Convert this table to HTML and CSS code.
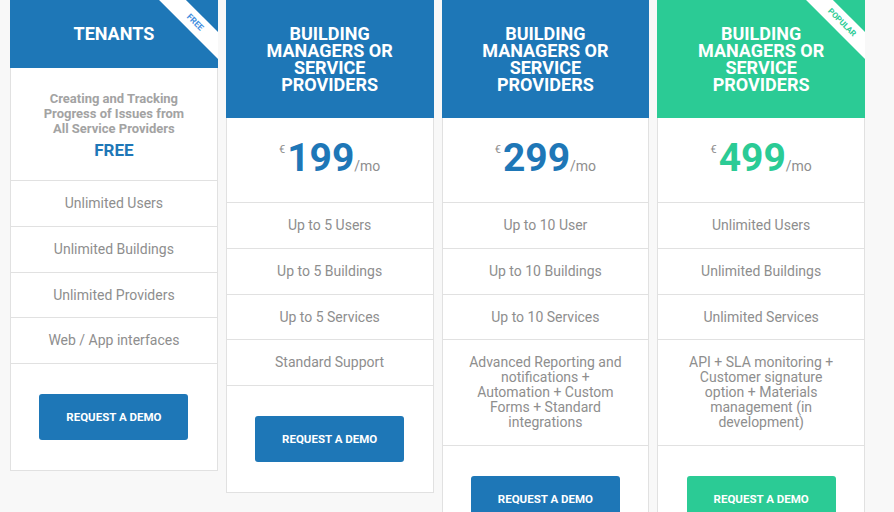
FILE: index.html
```html
<!DOCTYPE html>
<html lang="en">
<head>
<meta charset="utf-8">
<title>Pricing</title>
<link rel="stylesheet" href="styles.css">
</head>
<body>
<div class="plans">
  <div class="plan">
    <div class="plan-head head-short">
      <h2>TENANTS</h2>
      <span class="ribbon ribbon-blue">FREE</span>
    </div>
    <div class="plan-body">
      <div class="plan-intro">
        <p>Creating and Tracking Progress of Issues from All Service Providers</p>
        <div class="free">FREE</div>
      </div>
      <ul class="features">
        <li>Unlimited Users</li>
        <li>Unlimited Buildings</li>
        <li>Unlimited Providers</li>
        <li>Web / App interfaces</li>
      </ul>
      <div class="plan-cta"><a class="btn" href="#">REQUEST A DEMO</a></div>
    </div>
  </div>

  <div class="plan">
    <div class="plan-head">
      <h2>BUILDING MANAGERS OR SERVICE PROVIDERS</h2>
    </div>
    <div class="plan-body">
      <div class="price"><span class="cur">€</span><span class="amt">199</span><span class="per">/mo</span></div>
      <ul class="features">
        <li>Up to 5 Users</li>
        <li>Up to 5 Buildings</li>
        <li>Up to 5 Services</li>
        <li>Standard Support</li>
      </ul>
      <div class="plan-cta"><a class="btn" href="#">REQUEST A DEMO</a></div>
    </div>
  </div>

  <div class="plan">
    <div class="plan-head">
      <h2>BUILDING MANAGERS OR SERVICE PROVIDERS</h2>
    </div>
    <div class="plan-body">
      <div class="price"><span class="cur">€</span><span class="amt">299</span><span class="per">/mo</span></div>
      <ul class="features">
        <li>Up to 10 User</li>
        <li>Up to 10 Buildings</li>
        <li>Up to 10 Services</li>
        <li class="multi">Advanced Reporting and notifications + Automation + Custom Forms + Standard integrations</li>
      </ul>
      <div class="plan-cta"><a class="btn" href="#">REQUEST A DEMO</a></div>
    </div>
  </div>

  <div class="plan plan-green">
    <div class="plan-head">
      <h2>BUILDING MANAGERS OR SERVICE PROVIDERS</h2>
      <span class="ribbon ribbon-green">POPULAR</span>
    </div>
    <div class="plan-body">
      <div class="price"><span class="cur">€</span><span class="amt">499</span><span class="per">/mo</span></div>
      <ul class="features">
        <li>Unlimited Users</li>
        <li>Unlimited Buildings</li>
        <li>Unlimited Services</li>
        <li class="multi">API + SLA monitoring + Customer signature option + Materials management (in development)</li>
      </ul>
      <div class="plan-cta"><a class="btn" href="#">REQUEST A DEMO</a></div>
    </div>
  </div>
</div>
</body>
</html>
```

FILE: styles.css
```css
* { box-sizing: border-box; }

html, body {
  margin: 0;
  padding: 0;
  background: #f8f8f8;
  font-family: Roboto, "Liberation Sans", Arial, sans-serif;
  overflow: hidden;
}

.plans {
  display: grid;
  grid-template-columns: repeat(4, 1fr);
  column-gap: 8px;
  width: 855px;
  margin-left: 10px;
  align-items: start;
}

.plan {
  background: #fff;
}

.plan-head {
  position: relative;
  overflow: hidden;
  background: #1e77b7;
  padding: 25px 20px;
  text-align: center;
}

.head-short {
  padding: 25px 20px 26px;
}

.plan-green .plan-head {
  background: #2bcb95;
}

.plan-head h2 {
  margin: 0;
  color: #fff;
  font-size: 18px;
  line-height: 17px;
  font-weight: 700;
}

.ribbon {
  position: absolute;
  top: 13px;
  right: -27px;
  width: 100px;
  height: 19px;
  background: #fff;
  transform: rotate(45deg);
  text-align: center;
  font-size: 8px;
  line-height: 19px;
  font-weight: 700;
}

.ribbon-blue { color: #3f8ee0; font-size: 8.5px; }
.ribbon-green { color: #2bcb95; }

.plan-body {
  border: 1px solid #e1e1e1;
  border-top: 0;
  text-align: center;
}

.plan-intro {
  padding: 23px 25px 20px;
  border-bottom: 1px solid #e1e1e1;
}

.plan-intro p {
  margin: 0;
  font-size: 13px;
  line-height: 15px;
  font-weight: 700;
  color: #a3a3a3;
}

.free {
  margin-top: 4px;
  font-size: 17px;
  line-height: 20px;
  font-weight: 700;
  color: #1e77b7;
}

.price {
  display: flex;
  justify-content: center;
  align-items: baseline;
  padding: 20px 0 24px;
  border-bottom: 1px solid #e1e1e1;
  white-space: nowrap;
}

.cur {
  align-self: flex-start;
  margin-top: 6px;
  margin-right: 2px;
  font-size: 11px;
  line-height: 11px;
  color: #8e8e8e;
}

.amt {
  font-size: 39px;
  line-height: 40px;
  font-weight: 700;
  color: #1e77b7;
}

.plan-green .amt { color: #2bcb95; }

.per {
  font-size: 14px;
  line-height: 15px;
  color: #8e8e8e;
}

.features {
  list-style: none;
  margin: 0;
  padding: 0;
}

.features li {
  padding: 15px 25px;
  font-size: 14px;
  line-height: 14.75px;
  color: #8e8e8e;
  border-bottom: 1px solid #e1e1e1;
}

.features li.multi {
  line-height: 15px;
}

.plan-cta {
  padding: 30px 0;
}

.btn {
  display: inline-block;
  width: 149px;
  height: 46px;
  line-height: 46px;
  border-radius: 3px;
  background: #1e77b7;
  color: #fff;
  font-size: 11.5px;
  font-weight: 700;
  text-decoration: none;
}

.plan-green .btn { background: #2bcb95; }
```
